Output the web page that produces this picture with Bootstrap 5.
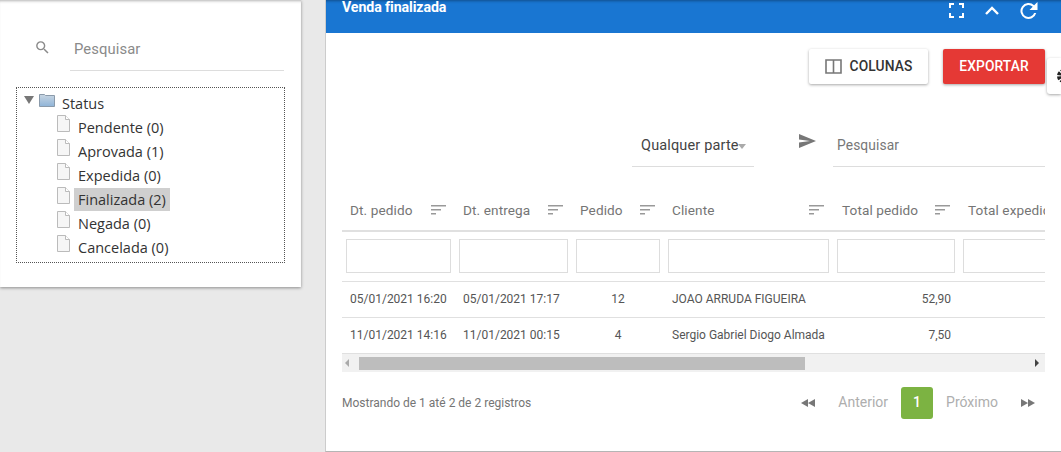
<!DOCTYPE html>
<html lang="pt-BR">
<head>
<meta charset="utf-8">
<title>Venda finalizada</title>
<link href="https://cdn.jsdelivr.net/npm/bootstrap@5.3.0/dist/css/bootstrap.min.css" rel="stylesheet">
<style>
html,body{height:452px;overflow:hidden}
body{background:#e9e9e9;font-family:Roboto,"Liberation Sans",sans-serif;color:#333}
.shell{height:452px;align-items:flex-start}
.side-box{width:301px;height:287px;background:#fff;box-shadow:0 1px 3px rgba(0,0,0,.4),inset 0 3px 3px -2px rgba(0,0,0,.3);padding:30px 16px 0 16px;flex:none}
.side-search{height:41px;margin:0 1px 0 54px;border-bottom:1px solid #ddd;padding:8px 0 0 4px;font-size:14.8px;color:#8a8a8a;letter-spacing:.1px}
.side-ico{left:34px;top:39px}
.tree-box{margin-top:16px;height:176px;border:1px dotted #555;padding:4px 0 0 6px;font-family:"Open Sans","Noto Sans",sans-serif;font-size:14.5px;color:#333}
.tree-line{height:24px;line-height:24px;white-space:nowrap}
.tree-kid{padding-left:34px}
.tree-sel{background:#cfcfcf;padding:0 4px;line-height:23px;margin-left:-4px;display:inline-block}
.main-panel{margin-left:24px;width:736px;height:452px;background:#fff;border-left:1px solid #ccc;border-bottom:1px solid #b5b5b5;flex:none}
.head-bar{height:33px;background:#1976d2;color:#fff;font-size:14.2px;font-weight:700;padding:0 16px;box-shadow:inset 0 3px 3px -2px rgba(0,0,0,.35)}
.head-title{position:relative;top:-9px;letter-spacing:-.1px}
.head-tools{gap:21px;position:relative;top:-6px;margin-right:7px}
.tool-row{height:62px;padding:16px 16px 0 0;gap:15px}
.btn-col,.btn-exp{height:35px;font-size:13.8px;font-weight:500;border-radius:2px;padding:0;border:0;box-shadow:0 1px 3px rgba(0,0,0,.35);letter-spacing:.1px}
.btn-col{width:119px;background:#fff;color:#333}
.btn-exp{width:102px;background:#e53935;color:#fff}
.gear-tab{right:0;top:58px;width:14px;height:36px;background:#fff;border-radius:3px 0 0 3px;box-shadow:0 1px 3px rgba(0,0,0,.35);overflow:hidden;z-index:3}
.find-row{padding:0 16px 0 306px;margin-top:29px;height:43px}
.find-sel{width:122px;height:43px;border-bottom:1px solid #ddd;font-size:14.5px;color:#444;padding:11px 0 0 9px;position:relative;letter-spacing:.15px}
.find-arrow{position:absolute;right:8px;top:20px;width:0;height:0;border:4px solid transparent;border-top:5px solid #aaa;border-bottom:0}
.find-send{width:79px;padding:0 0 0 45px}
.find-send svg{margin-top:9px}
.find-inp{width:212px;height:43px;border-bottom:1px solid #ddd;font-size:13.8px;color:#777;padding:11px 0 0 4px;letter-spacing:.1px}
.grid-wrap{margin:27px 16px 0 16px;overflow:hidden;width:703px}
.data-grid{border-collapse:collapse;table-layout:fixed;width:820px;font-size:12px;color:#555}
.data-grid th{height:37px;font-weight:400;font-size:13.6px;color:#757575;border-bottom:2px solid #e0e0e0;padding:0 9px 4px 8px;white-space:nowrap;letter-spacing:.1px}
.data-grid th:nth-child(n+5){padding-left:9px}
.data-grid td{height:36px;border-bottom:1px solid #e0e0e0;padding:0 8px;white-space:nowrap;overflow:hidden}
.data-grid tr.filter-row td{height:50px;padding:0 4px}
.filter-box{height:34px;border:1px solid #ddd;background:#fff}
.sort-ico{float:right;margin-top:5px}
.fake-scroll{height:18px;background:#f1f1f1;margin:0 16px;width:703px}
.fake-thumb{position:absolute;left:17px;top:3px;width:446px;height:13px;background:#bdbdbd}
.scroll-l,.scroll-r{position:absolute;top:5px;width:0;height:0;border:4px solid transparent}
.scroll-l{left:3px;border-right:4px solid #aaa;border-left:0}
.scroll-r{right:6px;border-left:4px solid #444;border-right:0}
.foot-row{margin:0 16px;height:62px;font-size:12px;color:#757575}
.foot-pager{font-size:14px;color:#aeaeae;margin-right:10px}
.pg-one{width:32px;height:32px;background:#7cb342;color:#fff;border-radius:3px;font-weight:500;margin:0 13px}
.arrow-l{margin-right:23px}
.arrow-r{margin-left:23px}
</style>
</head>
<body>
<div class="d-flex shell">
  <aside class="side-box position-relative">
    <svg class="side-ico position-absolute" width="17" height="17" viewBox="0 0 24 24" fill="#8a8a8a"><path d="M15.5 14h-.79l-.28-.27A6.471 6.471 0 0 0 16 9.5 6.5 6.5 0 1 0 9.500 16c1.610 0 3.090-.59 4.230-1.570l.27.28v.79l5 4.990L20.490 19l-4.990-5zm-6 0C7.010 14 5 11.990 5 9.500S7.010 5 9.500 5 14 7.010 14 9.500 11.990 14 9.500 14z"/></svg>
    <div class="side-search">Pesquisar</div>
    <div class="tree-box">
      <div class="tree-line d-flex align-items-center">
        <svg width="10" height="8" viewBox="0 0 10 8" style="margin:-9px 0 0 1px"><path d="M0 0h10L5 8z" fill="#777"/></svg>
        <svg width="16" height="14" viewBox="0 0 16 14" style="margin:-8px 0 0 5px"><defs><linearGradient id="fg" x1="0" y1="0" x2="0" y2="1"><stop offset="0" stop-color="#c9d6e2"/><stop offset="1" stop-color="#8fb4d8"/></linearGradient></defs><path d="M.5 1.500h5l1 1h9v11H.5z" fill="url(#fg)" stroke="#8a9aaa"/></svg>
        <span style="margin-left:7px">Status</span>
      </div>
      <div class="tree-line tree-kid d-flex"><svg width="13" height="17" viewBox="0 0 13 17" style="margin-top:-1px"><path d="M.5.500h8l4 4v12H.5z" fill="#f6f6f6" stroke="#bbb"/><path d="M8.500.500v4h4" fill="#fff" stroke="#bbb"/></svg><span style="margin-left:8px">Pendente (0)</span></div>
      <div class="tree-line tree-kid d-flex"><svg width="13" height="17" viewBox="0 0 13 17" style="margin-top:-1px"><path d="M.5.500h8l4 4v12H.5z" fill="#f6f6f6" stroke="#bbb"/><path d="M8.500.500v4h4" fill="#fff" stroke="#bbb"/></svg><span style="margin-left:8px">Aprovada (1)</span></div>
      <div class="tree-line tree-kid d-flex"><svg width="13" height="17" viewBox="0 0 13 17" style="margin-top:-1px"><path d="M.5.500h8l4 4v12H.5z" fill="#f6f6f6" stroke="#bbb"/><path d="M8.500.500v4h4" fill="#fff" stroke="#bbb"/></svg><span style="margin-left:8px">Expedida (0)</span></div>
      <div class="tree-line tree-kid d-flex"><svg width="13" height="17" viewBox="0 0 13 17" style="margin-top:-1px"><path d="M.5.500h8l4 4v12H.5z" fill="#f6f6f6" stroke="#bbb"/><path d="M8.500.500v4h4" fill="#fff" stroke="#bbb"/></svg><span style="margin-left:8px"><span class="tree-sel">Finalizada (2)</span></span></div>
      <div class="tree-line tree-kid d-flex"><svg width="13" height="17" viewBox="0 0 13 17" style="margin-top:-1px"><path d="M.5.500h8l4 4v12H.5z" fill="#f6f6f6" stroke="#bbb"/><path d="M8.500.500v4h4" fill="#fff" stroke="#bbb"/></svg><span style="margin-left:8px">Negada (0)</span></div>
      <div class="tree-line tree-kid d-flex"><svg width="13" height="17" viewBox="0 0 13 17" style="margin-top:-1px"><path d="M.5.500h8l4 4v12H.5z" fill="#f6f6f6" stroke="#bbb"/><path d="M8.500.500v4h4" fill="#fff" stroke="#bbb"/></svg><span style="margin-left:8px">Cancelada (0)</span></div>
    </div>
  </aside>

  <main class="main-panel position-relative">
    <div class="head-bar d-flex justify-content-between align-items-center">
      <span class="head-title">Venda finalizada</span>
      <div class="head-tools d-flex align-items-center">
        <svg width="15" height="15" viewBox="0 0 15 15" fill="none" stroke="#fff" stroke-width="2"><path d="M1 5V1h4M10 1h4v4M14 10v4h-4M5 14H1v-4"/></svg>
        <svg width="14" height="9" viewBox="0 0 14 9" fill="none" stroke="#fff" stroke-width="2.4"><path d="M1 8l6-6 6 6"/></svg>
        <svg width="18" height="18" viewBox="3.500 3 18 18" fill="#fff"><path d="M17.650 6.350A8 8 0 1 0 19.730 14h-2.080a6 6 0 1 1-1.410-6.240L13 11h8V3z"/></svg>
      </div>
    </div>

    <div class="tool-row d-flex justify-content-end">
      <button class="btn-col d-flex align-items-center justify-content-center gap-2" type="button">
        <svg width="17" height="15" viewBox="0 0 17 15" fill="none" stroke="#777" stroke-width="1.6"><path d="M1 1h15v13H1zM8.500 1v13"/></svg>
        COLUNAS
      </button>
      <button class="btn-exp" type="button">EXPORTAR</button>
    </div>
    <div class="gear-tab position-absolute"><svg width="16" height="16" viewBox="0 0 16 16" style="margin:10px 0 0 9px"><circle cx="8" cy="8" r="5" fill="none" stroke="#222" stroke-width="4" stroke-dasharray="3 1"/></svg></div>

    <div class="find-row d-flex">
      <div class="find-sel">Qualquer parte<span class="find-arrow"></span></div>
      <div class="find-send"><svg width="17" height="14" viewBox="0 0 17 14"><path d="M0 0l17 7-17 7v-5.500L11 7 0 5.500z" fill="#777"/></svg></div>
      <div class="find-inp">Pesquisar</div>
    </div>

    <div class="grid-wrap">
      <table class="data-grid">
        <colgroup><col style="width:113px"><col style="width:117px"><col style="width:92px"><col style="width:169px"><col style="width:126px"><col style="width:203px"></colgroup>
        <thead>
          <tr>
            <th>Dt. pedido<svg class="sort-ico" width="15" height="10" viewBox="0 0 15 10" fill="#999"><path d="M0 0h15v1.500H0zM0 4h10v1.500H0zM0 8h5v1.500H0z"/></svg></th>
            <th>Dt. entrega<svg class="sort-ico" width="15" height="10" viewBox="0 0 15 10" fill="#999"><path d="M0 0h15v1.500H0zM0 4h10v1.500H0zM0 8h5v1.500H0z"/></svg></th>
            <th>Pedido<svg class="sort-ico" width="15" height="10" viewBox="0 0 15 10" fill="#999"><path d="M0 0h15v1.500H0zM0 4h10v1.500H0zM0 8h5v1.500H0z"/></svg></th>
            <th>Cliente<svg class="sort-ico" width="15" height="10" viewBox="0 0 15 10" fill="#999"><path d="M0 0h15v1.500H0zM0 4h10v1.500H0zM0 8h5v1.500H0z"/></svg></th>
            <th>Total pedido<svg class="sort-ico" width="15" height="10" viewBox="0 0 15 10" fill="#999"><path d="M0 0h15v1.500H0zM0 4h10v1.500H0zM0 8h5v1.500H0z"/></svg></th>
            <th>Total expedido</th>
          </tr>
        </thead>
        <tbody>
          <tr class="filter-row"><td><div class="filter-box"></div></td><td><div class="filter-box"></div></td><td><div class="filter-box"></div></td><td><div class="filter-box"></div></td><td><div class="filter-box"></div></td><td><div class="filter-box"></div></td></tr>
          <tr><td>05/01/2021 16:20</td><td>05/01/2021 17:17</td><td class="text-center">12</td><td>JOAO ARRUDA FIGUEIRA</td><td class="text-end">52,90</td><td></td></tr>
          <tr><td>11/01/2021 14:16</td><td>11/01/2021 00:15</td><td class="text-center">4</td><td>Sergio Gabriel Diogo Almada</td><td class="text-end">7,50</td><td></td></tr>
        </tbody>
      </table>
    </div>
    <div class="fake-scroll position-relative"><span class="scroll-l"></span><span class="fake-thumb"></span><span class="scroll-r"></span></div>

    <div class="foot-row d-flex justify-content-between align-items-center">
      <span>Mostrando de 1 até 2 de 2 registros</span>
      <div class="foot-pager d-flex align-items-center">
        <svg class="arrow-l" width="14" height="8" viewBox="0 0 14 8" fill="#777"><path d="M7 0v8L0 4zM14 0v8L7 4z"/></svg>
        <span>Anterior</span>
        <span class="pg-one d-flex align-items-center justify-content-center">1</span>
        <span>Próximo</span>
        <svg class="arrow-r" width="14" height="8" viewBox="0 0 14 8" fill="#777"><path d="M0 0v8l7-4zM7 0v8l7-4z"/></svg>
      </div>
    </div>
  </main>
</div>
<script src="https://cdn.jsdelivr.net/npm/bootstrap@5.3.0/dist/js/bootstrap.bundle.min.js"></script>
</body>
</html>
